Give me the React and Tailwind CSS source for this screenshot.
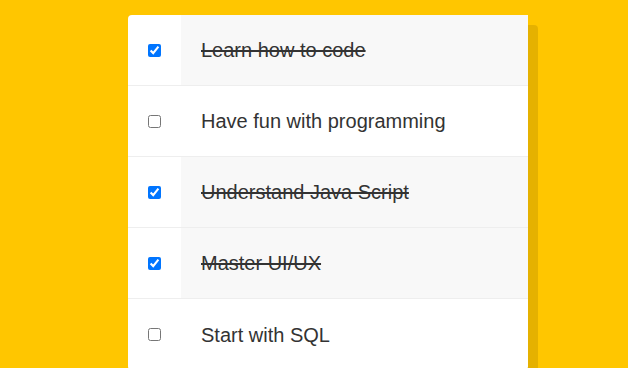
const todos = [
  { text: "Learn how to code", done: true },
  { text: "Have fun with programming", done: false },
  { text: "Understand Java Script", done: true },
  { text: "Master UI/UX", done: true },
  { text: "Start with SQL", done: false },
];

export default function App() {
  return (
    <div className="min-h-screen w-full bg-[#ffc600] pt-[15px] font-['Liberation_Sans',Arial,sans-serif] overflow-hidden h-[368px]">
      <ul className="ml-[128px] w-[400px] bg-white rounded-[4px] shadow-[10px_10px_0_rgba(0,0,0,0.1)]">
        {todos.map((t, i) => (
          <li
            key={i}
            className={`flex h-[71px] ${i < todos.length - 1 ? "border-b border-[#eeeeee]" : ""}`}
          >
            <label className="flex items-center px-[20px]">
              <input type="checkbox" defaultChecked={t.done} className="m-0 w-[13px] h-[13px]" />
            </label>
            <div
              className={`flex-1 flex items-center pl-[20px] text-[20px] text-[#333333] ${
                t.done ? "bg-[#f8f8f8] line-through" : ""
              }`}
            >
              {t.text}
            </div>
          </li>
        ))}
      </ul>
    </div>
  );
}
